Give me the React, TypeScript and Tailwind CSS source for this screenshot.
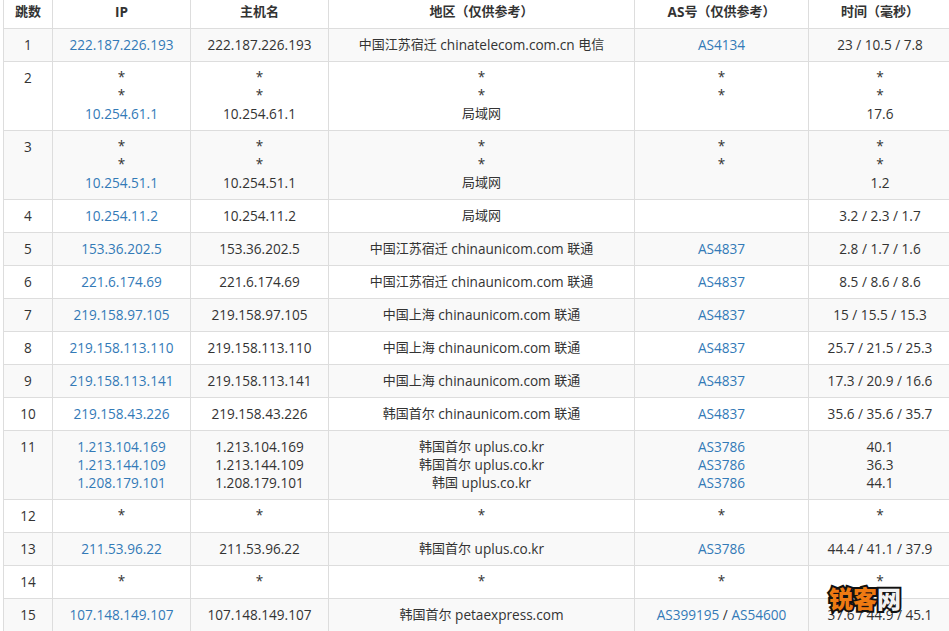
const link = "text-[#337ab7]";

type Row = {
  hop: number;
  ip: string[];
  host: string[];
  region: string[];
  as: string[];
  time: string[];
};

const rows: Row[] = [
  { hop: 1, ip: ["222.187.226.193"], host: ["222.187.226.193"], region: ["中国江苏宿迁 chinatelecom.com.cn 电信"], as: ["AS4134"], time: ["23 / 10.5 / 7.8"] },
  { hop: 2, ip: ["*", "*", "10.254.61.1"], host: ["*", "*", "10.254.61.1"], region: ["*", "*", "局域网"], as: ["*", "*"], time: ["*", "*", "17.6"] },
  { hop: 3, ip: ["*", "*", "10.254.51.1"], host: ["*", "*", "10.254.51.1"], region: ["*", "*", "局域网"], as: ["*", "*"], time: ["*", "*", "1.2"] },
  { hop: 4, ip: ["10.254.11.2"], host: ["10.254.11.2"], region: ["局域网"], as: [], time: ["3.2 / 2.3 / 1.7"] },
  { hop: 5, ip: ["153.36.202.5"], host: ["153.36.202.5"], region: ["中国江苏宿迁 chinaunicom.com 联通"], as: ["AS4837"], time: ["2.8 / 1.7 / 1.6"] },
  { hop: 6, ip: ["221.6.174.69"], host: ["221.6.174.69"], region: ["中国江苏宿迁 chinaunicom.com 联通"], as: ["AS4837"], time: ["8.5 / 8.6 / 8.6"] },
  { hop: 7, ip: ["219.158.97.105"], host: ["219.158.97.105"], region: ["中国上海 chinaunicom.com 联通"], as: ["AS4837"], time: ["15 / 15.5 / 15.3"] },
  { hop: 8, ip: ["219.158.113.110"], host: ["219.158.113.110"], region: ["中国上海 chinaunicom.com 联通"], as: ["AS4837"], time: ["25.7 / 21.5 / 25.3"] },
  { hop: 9, ip: ["219.158.113.141"], host: ["219.158.113.141"], region: ["中国上海 chinaunicom.com 联通"], as: ["AS4837"], time: ["17.3 / 20.9 / 16.6"] },
  { hop: 10, ip: ["219.158.43.226"], host: ["219.158.43.226"], region: ["韩国首尔 chinaunicom.com 联通"], as: ["AS4837"], time: ["35.6 / 35.6 / 35.7"] },
  { hop: 11, ip: ["1.213.104.169", "1.213.144.109", "1.208.179.101"], host: ["1.213.104.169", "1.213.144.109", "1.208.179.101"], region: ["韩国首尔 uplus.co.kr", "韩国首尔 uplus.co.kr", "韩国 uplus.co.kr"], as: ["AS3786", "AS3786", "AS3786"], time: ["40.1", "36.3", "44.1"] },
  { hop: 12, ip: ["*"], host: ["*"], region: ["*"], as: ["*"], time: ["*"] },
  { hop: 13, ip: ["211.53.96.22"], host: ["211.53.96.22"], region: ["韩国首尔 uplus.co.kr"], as: ["AS3786"], time: ["44.4 / 41.1 / 37.9"] },
  { hop: 14, ip: ["*"], host: ["*"], region: ["*"], as: ["*"], time: ["*"] },
  { hop: 15, ip: ["107.148.149.107"], host: ["107.148.149.107"], region: ["韩国首尔 petaexpress.com"], as: ["AS399195 / AS54600"], time: ["37.6 / 44.9 / 45.1"] },
];

const heads = [
  { label: "跳数", w: "w-[49px]" },
  { label: "IP", w: "w-[138px]" },
  { label: "主机名", w: "w-[138px]" },
  { label: "地区（仅供参考）", w: "w-[306px]" },
  { label: "AS号（仅供参考）", w: "w-[174px]" },
  { label: "时间（毫秒）", w: "w-[143px]" },
];

const cell = "border border-[#ddd] px-2 py-[7px] text-center align-top";

// latin runs sit a bit larger than the CJK ones in the picture
function Mixed({ text }: { text: string }) {
  const parts = text.split(/([\u3000-\u9fff\uff00-\uffef]+)/).filter(Boolean);
  return (
    <>
      {parts.map((p, i) =>
        /[\u3000-\u9fff\uff00-\uffef]/.test(p) ? (
          <span key={i} className="relative -top-px">
            {p}
          </span>
        ) : (
          <span key={i} className="text-[13.6px]">
            {p}
          </span>
        )
      )}
    </>
  );
}

function Lines({ items, className }: { items: string[]; className?: string }) {
  return (
    <>
      {items.map((t, i) => (
        <div key={i} className={t === "*" ? "relative -top-px" : className}>
          <Mixed text={t} />
        </div>
      ))}
    </>
  );
}

export default function App() {
  return (
    <div className="h-[631px] w-[949px] overflow-hidden bg-white pl-[3px] font-['Open_Sans','Noto_Sans_CJK_SC',sans-serif] text-[13px] leading-[18px] text-[#333]">
      <div className="relative -mt-[5px]">
        <table className="w-[948px] table-fixed border-collapse">
          <thead>
            <tr>
              {heads.map((h) => (
                <th key={h.label} className={`${h.w} ${cell} font-bold`}>
                  <Mixed text={h.label} />
                </th>
              ))}
            </tr>
          </thead>
          <tbody>
            {rows.map((r) => (
              <tr key={r.hop} className={r.hop % 2 === 1 ? "bg-[#f9f9f9]" : "bg-white"}>
                <td className={cell}>
                  <Mixed text={String(r.hop)} />
                </td>
                <td className={cell}>
                  <Lines items={r.ip} className={link} />
                </td>
                <td className={cell}>
                  <Lines items={r.host} />
                </td>
                <td className={cell}>
                  <Lines items={r.region} />
                </td>
                <td className={cell}>
                  {r.as.length === 1 && r.as[0].includes(" / ") ? (
                    <div className="text-[13.6px]">
                      <span className={link}>AS399195</span> / <span className={link}>AS54600</span>
                    </div>
                  ) : (
                    <Lines items={r.as} className={link} />
                  )}
                </td>
                <td className={cell}>
                  <Lines items={r.time} />
                </td>
              </tr>
            ))}
          </tbody>
        </table>
        {/* watermark over the table */}
        <div className="absolute left-[826px] top-[588px] font-['Noto_Sans_CJK_SC',sans-serif] text-[24px] font-black leading-[30px] text-[#ee7a12] [-webkit-text-stroke:4px_#111] [paint-order:stroke_fill]">
          锐客<span className="text-[#f2f2f2]">网</span>
        </div>
      </div>
    </div>
  );
}
